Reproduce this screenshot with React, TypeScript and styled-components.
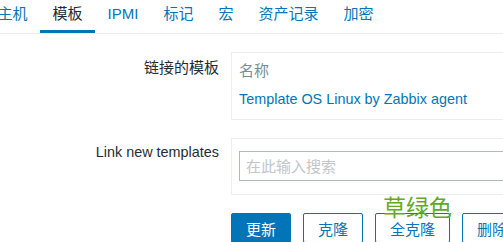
import styled, { createGlobalStyle } from "styled-components"

const GlobalStyle = createGlobalStyle`
    body {
        margin: 0;
        background: #ffffff;
        font-family: "Liberation Sans", Arial, "Noto Sans CJK SC", sans-serif;
        color: #1f2c33;
        overflow: hidden;
    }
`

const tabs = ["主机", "模板", "IPMI", "标记", "宏", "资产记录", "加密"]

const App = () => {
    return (
        <>
            <GlobalStyle />
            <TabBar>
                {tabs.map((t) => (
                    <Tab key={t} $active={t === "模板"}>{t}</Tab>
                ))}
            </TabBar>
            <Form>
                <Label $cjk>链接的模板</Label>
                <Panel>
                    <ColumnHead>名称</ColumnHead>
                    <TemplateLink href="#">Template OS Linux by Zabbix agent</TemplateLink>
                </Panel>

                <Label $top={5}>Link new templates</Label>
                <SearchPanel>
                    <SearchInput placeholder="在此输入搜索" />
                </SearchPanel>

                <div />
                <ButtonRow>
                    <Button $primary>更新</Button>
                    <Button>克隆</Button>
                    <Button>全克隆</Button>
                    <Button>删除</Button>
                    <Note>草绿色</Note>
                </ButtonRow>
            </Form>
        </>
    )
}

const TabBar = styled.div`
    display: flex;
    margin-left: -15px;
    border-bottom: 1px solid #ebeef0;
    height: 33px;
`

const Tab = styled.div<{ $active?: boolean }>`
    padding: 0 12.5px;
    font-size: 15px;
    line-height: 28px;
    white-space: nowrap;
    color: ${(p) => (p.$active ? "#1f2c33" : "#0275b8")};
    border-bottom: 3px solid ${(p) => (p.$active ? "#0275b8" : "transparent")};
    height: 30px;
`

const Form = styled.div`
    display: grid;
    grid-template-columns: 219px 1fr;
    column-gap: 12px;
    row-gap: 18px;
    margin-top: 18px;
`

const Label = styled.div<{ $cjk?: boolean; $top?: number }>`
    text-align: right;
    font-size: ${(p) => (p.$cjk ? "15px" : "14.4px")};
    padding-top: ${(p) => p.$top ?? 7}px;
    line-height: 18px;
    white-space: nowrap;
`

const Panel = styled.div`
    border: 1px solid #ebeef0;
    border-right: none;
    padding: 9px 7px 9px;
    height: 48px;
`

const ColumnHead = styled.div`
    font-size: 15px;
    line-height: 18px;
    color: #768d99;
`

const TemplateLink = styled.a`
    display: block;
    margin-top: 10px;
    font-size: 14.4px;
    line-height: 18px;
    color: #0275b8;
    text-decoration: none;
    white-space: nowrap;
`

const SearchPanel = styled.div`
    border: 1px solid #ebeef0;
    border-right: none;
    padding: 12px 0 13px 7px;
`

const SearchInput = styled.input`
    display: block;
    box-sizing: border-box;
    width: 100%;
    height: 30px;
    border: 1px solid #acbbc2;
    border-right: none;
    padding: 0 6px;
    font-family: "Liberation Sans", "Noto Sans CJK SC", sans-serif;
    font-size: 15px;
    outline: none;
    &::placeholder {
        color: #c2c6c8;
    }
`

const ButtonRow = styled.div`
    position: relative;
    display: flex;
    gap: 12px;
`

const Button = styled.button<{ $primary?: boolean }>`
    box-sizing: border-box;
    height: 30px;
    padding: 0 14px;
    border-radius: 2px;
    border: 1px solid #0275b8;
    background: ${(p) => (p.$primary ? "#0275b8" : "#ffffff")};
    color: ${(p) => (p.$primary ? "#ffffff" : "#0275b8")};
    font-family: "Liberation Sans", "Noto Sans CJK SC", sans-serif;
    font-size: 15px;
    white-space: nowrap;
`

const Note = styled.span`
    position: absolute;
    left: 152px;
    top: -19px;
    font-family: "Noto Sans CJK SC", sans-serif;
    font-size: 23px;
    line-height: 25px;
    color: #5fab22;
`

export default App
